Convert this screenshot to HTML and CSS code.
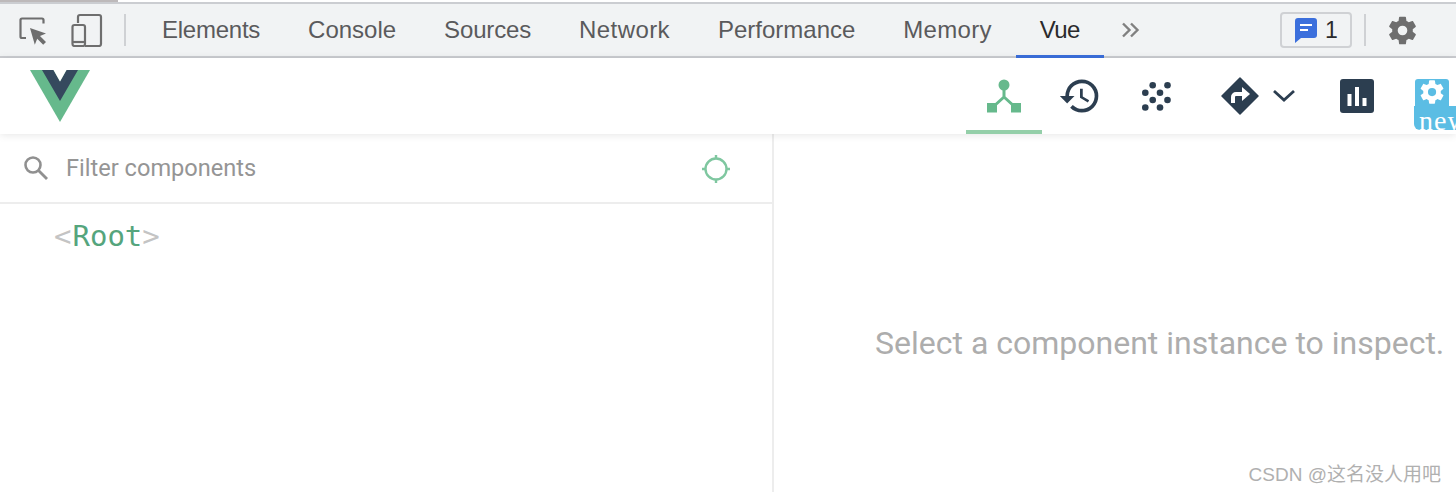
FILE: index.html
```html
<!DOCTYPE html>
<html lang="en">
<head>
    <meta charset="UTF-8">
    <title>Vue DevTools</title>
    <link rel="stylesheet" href="styles.css">
</head>
<body>
    <div class="progress"><div class="progress-bar"></div></div>

    <!-- browser devtools toolbar -->
    <div class="toolbar">
        <svg class="tool-icon inspect" width="30" height="32" viewBox="0 0 30 32">
            <path d="M8 24H4a1.500 1.500 0 0 1-1.500-1.500V6A1.500 1.500 0 0 1 4 4.500h20A1.500 1.500 0 0 1 25.500 6v3.500" fill="none" stroke="#6e6e6e" stroke-width="2.200"/>
            <path d="M12 14l16 5.500-6 2.500 6 6-2.800 2.800-6-6-2.400 6z" fill="#6e6e6e"/>
        </svg>
        <svg class="tool-icon device" width="32" height="34" viewBox="0 0 32 34">
            <path d="M7 10V4a2 2 0 0 1 2-2h19a2 2 0 0 1 2 2v27a2 2 0 0 1-2 2H14" fill="none" stroke="#6e6e6e" stroke-width="2.200"/>
            <rect x="1.500" y="12" width="12.500" height="21" rx="2" fill="none" stroke="#6e6e6e" stroke-width="2.200"/>
            <path d="M1 29h13" stroke="#6e6e6e" stroke-width="2.200"/>
        </svg>
        <div class="divider"></div>
        <div class="tabs">
            <a class="tab">Elements</a>
            <a class="tab">Console</a>
            <a class="tab">Sources</a>
            <a class="tab">Network</a>
            <a class="tab">Performance</a>
            <a class="tab">Memory</a>
            <a class="tab active">Vue</a>
        </div>
        <svg class="more" width="20" height="16" viewBox="0 0 20 16">
            <path d="M2 1.500l6.500 6.500L2 14.500M10 1.500l6.500 6.500-6.500 6.500" fill="none" stroke="#808080" stroke-width="2.400"/>
        </svg>
        <div class="issues">
            <svg width="22" height="25" viewBox="0 0 22 25">
                <path d="M3 0h16a3 3 0 0 1 3 3v14a3 3 0 0 1-3 3H6l-6 5V3a3 3 0 0 1 3-3z" fill="#3b6fdc"/>
                <path d="M5 7h12M5 12h8" stroke="#fff" stroke-width="2"/>
            </svg>
            <span>1</span>
        </div>
        <div class="divider small"></div>
        <svg class="gear" width="33" height="33" viewBox="0 0 24 24">
            <path fill="#6e6e6e" d="M19.430 12.980c.040-.320.070-.640.070-.980s-.030-.660-.070-.980l2.110-1.650c.190-.150.240-.420.120-.640l-2-3.460c-.120-.220-.390-.300-.610-.220l-2.490 1c-.520-.400-1.080-.730-1.690-.980l-.380-2.650A.488.488 0 0 0 14 2h-4c-.250 0-.460.180-.490.420l-.380 2.650c-.610.250-1.170.590-1.690.980l-2.490-1c-.230-.090-.490 0-.610.220l-2 3.460c-.130.220-.070.490.120.640l2.110 1.650c-.040.320-.070.650-.070.980s.030.660.070.980l-2.110 1.650c-.190.150-.240.420-.120.640l2 3.460c.120.220.390.300.610.220l2.490-1c.520.400 1.080.730 1.690.980l.380 2.650c.030.240.240.420.490.420h4c.250 0 .460-.180.490-.420l.380-2.650c.610-.250 1.170-.590 1.690-.980l2.490 1c.230.090.490 0 .610-.220l2-3.460c.120-.220.070-.490-.120-.640l-2.110-1.650zM12 15.500a3.500 3.500 0 1 1 0-7 3.500 3.500 0 0 1 0 7z"/>
        </svg>
    </div>

    <!-- vue devtools header -->
    <header class="vue-header">
        <svg class="logo" width="60" height="52" viewBox="0 0 60 52">
            <path d="M0 0h60L30 52z" fill="#66b98c"/>
            <path d="M12 0h11.500L30 11.500 36.500 0H48L30 31z" fill="#35495e"/>
            <path d="M23.500 0h13L30 11.500z" fill="#fff"/>
        </svg>
        <nav class="vue-nav">
            <a class="nav-btn active">
                <svg width="36" height="36" viewBox="0 0 36 36">
                    <circle cx="18" cy="7" r="5.500" fill="#66b98c"/>
                    <path d="M18 10v9.500M18 19L7 29M18 19l11 10" stroke="#66b98c" stroke-width="3" fill="none"/>
                    <rect x="1" y="25" width="10" height="9.500" fill="#66b98c"/>
                    <rect x="25" y="25" width="10" height="9.500" fill="#66b98c"/>
                </svg>
            </a>
            <a class="nav-btn">
                <svg width="44" height="44" viewBox="0 0 24 24">
                    <path fill="#2c3e50" d="M13 3a9 9 0 0 0-9 9H1l3.890 3.890.070.140L9 12H6a7 7 0 1 1 2.050 4.950l-1.420 1.420A8.950 8.950 0 0 0 13 21a9 9 0 0 0 0-18zm-1 5v5l4.280 2.540.720-1.210-3.500-2.080V8H12z"/>
                </svg>
            </a>
            <a class="nav-btn">
                <svg width="29" height="29" viewBox="0 0 29 29" fill="#2c3e50">
                    <circle cx="10.700" cy="3.300" r="3.300"/><circle cx="25.500" cy="3.300" r="3.300"/>
                    <circle cx="3.300" cy="10.700" r="3.300"/><circle cx="18" cy="10.700" r="3.300"/>
                    <circle cx="10.700" cy="18" r="3.300"/><circle cx="25.500" cy="18" r="3.300"/>
                    <circle cx="3.300" cy="25.500" r="3.300"/><circle cx="18" cy="25.500" r="3.300"/>
                </svg>
            </a>
            <a class="nav-btn routes">
                <svg width="38" height="38" viewBox="0 0 38 38">
                    <path d="M19 1l18 18-18 18L1 19z" fill="#2c3e50" stroke="#2c3e50" stroke-width="1.500" stroke-linejoin="round"/>
                    <path d="M12 26v-6a3 3 0 0 1 3-3h9" fill="none" stroke="#fff" stroke-width="4"/>
                    <path d="M21 10l8 7-8 7z" fill="#fff"/>
                </svg>
                <svg width="24" height="14" viewBox="0 0 24 14">
                    <path d="M2 2l10 9 10-9" fill="none" stroke="#2c3e50" stroke-width="2.800"/>
                </svg>
            </a>
            <a class="nav-btn perf">
                <svg width="34" height="34" viewBox="0 0 34 34">
                    <rect width="34" height="34" rx="3" fill="#2c3e50"/>
                    <path d="M7.500 15h4v12h-4zM15 8h4v19h-4zM22.500 19h4v8h-4z" fill="#fff"/>
                </svg>
            </a>
            <div class="settings-new">
                <svg class="new-gear" width="34" height="30" viewBox="0 0 34 30">
                    <path d="M0 3a3 3 0 0 1 3-3h28a3 3 0 0 1 3 3v27H0z" fill="#5bbde4"/>
                    <g transform="translate(3 -1) scale(1.170)">
                        <path fill="#fff" d="M19.430 12.980c.040-.320.070-.640.070-.980s-.030-.660-.070-.980l2.110-1.650c.190-.150.240-.420.120-.640l-2-3.460c-.120-.220-.390-.300-.610-.220l-2.490 1c-.520-.400-1.080-.730-1.690-.980l-.380-2.650A.488.488 0 0 0 14 2h-4c-.250 0-.460.180-.490.420l-.380 2.650c-.610.250-1.170.590-1.690.980l-2.490-1c-.230-.090-.490 0-.610.220l-2 3.460c-.130.220-.070.490.120.640l2.110 1.650c-.040.320-.070.650-.070.980s.030.660.070.980l-2.110 1.650c-.190.150-.240.420-.120.640l2 3.460c.120.220.390.300.610.220l2.490-1c.520.400 1.080.730 1.690.980l.380 2.650c.030.240.240.420.490.420h4c.250 0 .460-.180.490-.420l.380-2.650c.610-.250 1.170-.590 1.690-.980l2.490 1c.230.090.490 0 .610-.220l2-3.460c.120-.220.070-.490-.120-.640l-2.110-1.650zM12 15.500a3.500 3.500 0 1 1 0-7 3.500 3.500 0 0 1 0 7z"/>
                    </g>
                </svg>
                <span class="new-badge">new</span>
            </div>
        </nav>
    </header>

    <div class="panes">
        <section class="left-pane">
            <div class="filter">
                <svg class="search" width="26" height="26" viewBox="0 0 26 26">
                    <circle cx="10" cy="10" r="7.500" fill="none" stroke="#909090" stroke-width="2.600"/>
                    <path d="M15.500 15.500l8.500 8.500" stroke="#909090" stroke-width="2.800"/>
                </svg>
                <span class="filter-text">Filter components</span>
                <svg class="target" width="30" height="30" viewBox="0 0 30 30">
                    <circle cx="15" cy="15" r="10.500" fill="none" stroke="#7fc7a0" stroke-width="2.400"/>
                    <path d="M15 1v4M15 25v4M1 15h4M25 15h4" stroke="#7fc7a0" stroke-width="2.400"/>
                </svg>
            </div>
            <div class="tree"><span class="bracket">&lt;</span><span class="comp-name">Root</span><span class="bracket">&gt;</span></div>
        </section>
        <section class="right-pane">
            <p class="empty">Select a component instance to inspect.</p>
        </section>
    </div>

    <div class="watermark">CSDN @这名没人用吧</div>
</body>
</html>
```

FILE: styles.css
```css
* {
    margin: 0;
    padding: 0;
    box-sizing: border-box;
}

html, body {
    width: 1456px;
    height: 492px;
    overflow: hidden;
}

body {
    position: relative;
    background: #fff;
    font-family: "Liberation Sans", Arial, sans-serif;
}

/* top strip */
.progress {
    height: 4px;
    background: #fff;
    border-bottom: 2px solid #cbcdd1;
}

.progress-bar {
    width: 118px;
    height: 2px;
    background: #bdb9ba;
}

/* devtools toolbar */
.toolbar {
    display: flex;
    align-items: center;
    height: 54px;
    background: #f1f3f4;
    border-bottom: 2px solid #cbcdd1;
}

.inspect {
    margin-left: 18px;
}

.device {
    margin-left: 23px;
}

.divider {
    width: 2px;
    height: 32px;
    margin-left: 21px;
    background: #cfd1d4;
}

.divider.small {
    margin-left: 12px;
}

.tabs {
    display: flex;
    align-self: flex-start;
    margin-left: 12px;
}

.tab {
    display: flex;
    align-items: center;
    height: 52px;
    padding: 0 24px;
    font-size: 24px;
    color: #5a5a5c;
}

.tab:nth-child(1) {
    letter-spacing: -0.25px;
}

.tab:nth-child(3) {
    letter-spacing: -0.15px;
}

.tab:nth-child(4) {
    letter-spacing: 0.4px;
}

.tab:nth-child(6) {
    letter-spacing: 0.3px;
}

.tab.active {
    height: 54px;
    padding-top: 1px;
    letter-spacing: -0.6px;
    color: #2a2a2c;
    border-bottom: 3px solid #3b6fdc;
}

.more {
    margin-left: 17px;
}

.issues {
    display: flex;
    align-items: center;
    gap: 8px;
    width: 72px;
    height: 36px;
    margin-left: auto;
    padding-left: 13px;
    border: 2px solid #cfd1d4;
    border-radius: 4px;
    font-size: 23px;
    color: #2a2a2c;
}

.gear {
    margin-left: 20px;
    margin-right: 37px;
}

/* vue header */
.vue-header {
    position: relative;
    display: flex;
    align-items: flex-start;
    height: 76px;
    background: #fff;
    box-shadow: 0 1px 8px rgba(0, 0, 0, 0.1);
}

.logo {
    margin: 12px 0 0 30px;
}

.vue-nav {
    display: flex;
    align-items: flex-start;
    margin-left: auto;
    height: 76px;
}

.nav-btn {
    display: flex;
    align-items: center;
    justify-content: center;
    width: 76px;
    height: 76px;
}

.nav-btn.active {
    padding-top: 4px;
    border-bottom: 4px solid #94cfa9;
}

.routes {
    width: 93px;
    margin-left: 27px;
    justify-content: flex-start;
    gap: 13px;
}

.perf {
    width: 34px;
    margin-left: 26px;
}

.settings-new {
    width: 41px;
    margin-left: 41px;
    padding-top: 21px;
}

.new-gear {
    display: block;
}

.new-badge {
    display: block;
    width: 42px;
    height: 24px;
    margin: -3px 0 0 -1px;
    background: #5bbde4;
    border-radius: 0 0 0 6px;
    font-family: "Liberation Serif", serif;
    font-size: 28px;
    letter-spacing: 1px;
    line-height: 30px;
    color: #fff;
    padding-left: 5px;
    overflow: hidden;
}

/* split panes */
.panes {
    display: flex;
    height: 358px;
}

.left-pane {
    width: 774px;
    border-right: 2px solid #ededed;
}

.filter {
    display: flex;
    align-items: center;
    height: 70px;
    padding-left: 23px;
    border-bottom: 2px solid #ededed;
}

.filter-text {
    margin-left: 17px;
    font-family: Roboto, sans-serif;
    font-size: 23.600px;
    color: #959595;
}

.target {
    margin: 2px 41px 0 auto;
}

.tree {
    padding: 13px 0 0 54px;
    font-family: "DejaVu Sans Mono", monospace;
    font-size: 29px;
    line-height: 38px;
}

.bracket {
    color: #c4c4c4;
}

.comp-name {
    color: #55a57d;
    margin-left: 1px;
}

.right-pane {
    flex: 1;
    display: flex;
    align-items: center;
    padding: 60px 0 0 101px;
    overflow: hidden;
}

.empty {
    font-family: Roboto, sans-serif;
    font-size: 32px;
    color: #adadad;
    white-space: nowrap;
}

.watermark {
    position: absolute;
    right: 15px;
    bottom: 6px;
    font-family: "Liberation Sans", "Noto Sans CJK SC", sans-serif;
    font-size: 19px;
    color: #b0b0b0;
}
```
